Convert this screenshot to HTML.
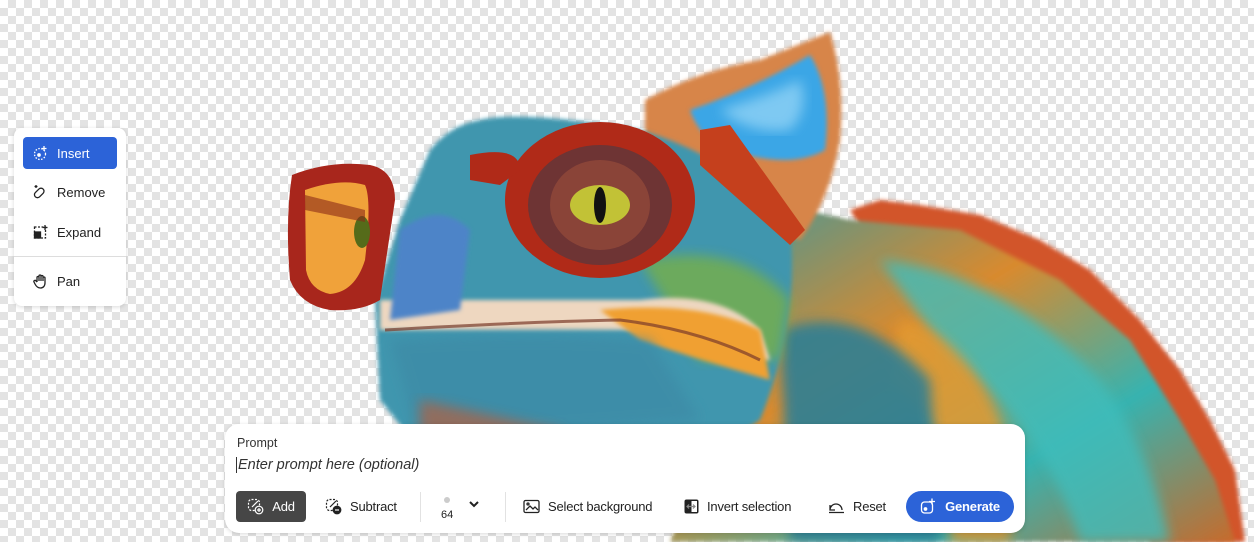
<!DOCTYPE html>
<html><head><meta charset="utf-8"><style>
html,body{margin:0;padding:0;}
body{width:1254px;height:542px;overflow:hidden;position:relative;font-family:"Liberation Sans",sans-serif;
background-color:#fff;
background-image:linear-gradient(45deg,#e3e3e3 25%,transparent 25%,transparent 75%,#e3e3e3 75%),linear-gradient(45deg,#e3e3e3 25%,transparent 25%,transparent 75%,#e3e3e3 75%);
background-size:16px 16px;background-position:0 0,8px 8px;}
svg.art{position:absolute;left:0;top:0;}
.menu{position:absolute;left:14px;top:128px;width:112px;height:178px;background:#fff;border-radius:8px;box-shadow:0 1px 4px rgba(0,0,0,.15);}
.mi{position:absolute;left:9px;width:94px;height:32px;border-radius:4px;font-size:13px;color:#222;display:flex;align-items:center;}
.mi svg{margin-left:10px;margin-right:8px}
.panel{position:absolute;left:225px;top:424px;width:800px;height:109px;background:#fff;border-radius:14px;box-shadow:0 1px 4px rgba(0,0,0,.15);}
.lbl{position:absolute;left:12px;top:12px;font-size:12.5px;color:#333;}
.inp{position:absolute;left:11px;top:33px;font-size:14.5px;font-style:italic;color:#333;border-left:1px solid #333;padding-left:1px;}
.btn{position:absolute;top:67px;height:31px;display:flex;align-items:center;font-size:13px;color:#222;letter-spacing:-0.2px}
.btn svg{margin-right:8px}
.sep{position:absolute;top:68px;width:1px;height:30px;background:#e2e2e2;}
</style></head><body>
<svg class="art" width="1254" height="542" viewBox="0 0 1254 542">
<defs>
<filter id="b"><feGaussianBlur stdDeviation="6"/></filter>
<filter id="b2"><feGaussianBlur stdDeviation="2"/></filter>
<linearGradient id="body" x1="0" y1="0" x2="1" y2="1"><stop offset="0" stop-color="#2f9aa8"/><stop offset=".4" stop-color="#d98a2e"/><stop offset=".7" stop-color="#36b3b0"/><stop offset="1" stop-color="#c86a2a"/></linearGradient>
</defs>
<path d="M850 210 L880 200 L920 205 L980 215 L1040 240 L1090 270 L1140 320 L1180 370 L1210 420 L1235 470 L1245 542 L1150 542 L1100 420 L1000 300 L880 260Z" fill="#d2542a" filter="url(#b2)"/>
<path d="M760 200 L850 220 L960 230 L1060 280 L1130 340 L1180 420 L1215 480 L1235 542 L670 542 L700 470 L760 400Z" fill="url(#body)" filter="url(#b2)"/>
<path d="M880 260 Q1000 270 1100 380 Q1150 450 1170 542 L1080 542 Q1040 420 950 360Z" fill="#3fbdbb" opacity=".8" filter="url(#b)"/>
<path d="M900 320 Q960 330 1000 420 Q1020 480 1010 542 L950 542 Q960 430 890 380Z" fill="#e29a32" opacity=".85" filter="url(#b)"/>
<path d="M780 330 Q860 300 930 380 L940 542 L790 542Z" fill="#2d7f94" opacity=".9" filter="url(#b)"/>
<path d="M645 100 Q700 70 760 60 Q810 40 830 32 Q845 80 840 140 Q830 200 800 240 L700 200 L645 140Z" fill="#d7854a" filter="url(#b2)"/>
<path d="M690 110 Q750 90 810 55 Q832 90 825 150 Q790 170 730 150 Q700 140 690 110Z" fill="#3aa6e6" filter="url(#b2)"/>
<path d="M720 110 Q770 95 800 80 Q810 110 790 130 Q750 135 720 110Z" fill="#8fd2f5" opacity=".8" filter="url(#b)"/>
<path d="M430 150 Q450 125 480 120 Q520 110 640 130 Q740 160 790 230 Q800 320 760 420 L700 460 L560 470 L420 450 L380 400 L375 300 L400 220Z" fill="#3f96ae" filter="url(#b2)"/>
<path d="M640 260 Q740 240 790 300 L780 360 L700 360Z" fill="#7fb33a" opacity=".7" filter="url(#b)"/>
<path d="M380 300 Q520 300 640 300 Q720 290 760 330 L770 360 Q720 360 640 330 Q520 330 380 330Z" fill="#eed7c0" filter="url(#b2)"/>
<path d="M600 310 Q700 300 760 330 L770 380 Q700 360 640 340Z" fill="#f0a032" filter="url(#b2)"/>
<path d="M385 330 Q520 322 620 320 Q700 330 760 360" stroke="#7a3a2a" stroke-width="3" fill="none" opacity=".7"/>
<path d="M390 340 Q540 330 650 340 L700 420 L420 440Z" fill="#3c8aa6" opacity=".7" filter="url(#b)"/>
<path d="M420 400 L560 430 L600 470 L420 460Z" fill="#c8582e" opacity=".6" filter="url(#b)"/>
<path d="M400 230 Q440 200 470 230 L460 310 L390 320Z" fill="#4e84c8" filter="url(#b2)"/>
<path d="M700 130 L730 125 L805 230 L790 245 L700 165Z" fill="#c5401d"/>
<ellipse cx="600" cy="200" rx="95" ry="78" fill="#b02a18"/>
<ellipse cx="600" cy="205" rx="72" ry="60" fill="#6e3434"/>
<ellipse cx="600" cy="205" rx="50" ry="45" fill="#8a4438"/>
<ellipse cx="600" cy="205" rx="30" ry="20" fill="#c2c236"/>
<ellipse cx="600" cy="205" rx="6" ry="18" fill="#111"/>
<path d="M470 155 Q520 145 520 170 L500 185 L470 180Z" fill="#b02a18"/>
<path d="M292 175 Q330 160 370 165 Q395 170 395 200 L380 300 Q360 312 330 310 Q300 305 290 280 Q285 220 292 175Z" fill="#a8261c"/>
<path d="M305 190 Q340 178 365 185 Q372 200 365 260 Q355 292 330 294 Q310 290 306 270Z" fill="#f0a23a"/>
<ellipse cx="362" cy="232" rx="8" ry="16" fill="#556b1a"/>
<path d="M305 195 L365 210 L365 222 L305 210Z" fill="#8a2a18" opacity=".6"/>
</svg>

<div class="menu">
 <div class="mi" style="top:9px;background:#2c63d8;color:#fff">
  <svg width="16" height="16" viewBox="0 0 16 16" fill="none" stroke="#fff" stroke-width="1.3"><circle cx="7" cy="9" r="5.5" stroke-dasharray="1.5 1.5"/><circle cx="6" cy="10" r="1.2" fill="#fff"/><path d="M11 1v5M8.5 3.5h5"/></svg>Insert</div>
 <div class="mi" style="top:48px">
  <svg width="16" height="16" viewBox="0 0 16 16" fill="none" stroke="#222" stroke-width="1.3"><rect x="3" y="5" width="6" height="11" rx="3" transform="rotate(45 8 10)"/><path d="M3 1v3M1.5 2.5h3"/></svg>Remove</div>
 <div class="mi" style="top:88px">
  <svg width="16" height="16" viewBox="0 0 16 16" fill="none" stroke="#222" stroke-width="1.3"><rect x="1.5" y="3" width="11" height="11" stroke-dasharray="2 1.5"/><rect x="1.5" y="8" width="6" height="6" fill="#222"/><path d="M12 1v5M9.5 3.5h5"/></svg>Expand</div>
 <div style="position:absolute;left:0;right:0;top:128px;height:1px;background:#ddd"></div>
 <div class="mi" style="top:137px">
  <svg width="16" height="16" viewBox="0 0 16 16" fill="none" stroke="#222" stroke-width="1.3"><path d="M4 9V4.5a1 1 0 012 0V8M6 8V3a1 1 0 012 0v5M8 8V3.5a1 1 0 012 0V8M10 8V5a1 1 0 012 0v5c0 3-2 5-4.5 5S3 13 2 11l-1-2a1 1 0 012-1l1 1"/></svg>Pan</div>
</div>

<div class="panel">
 <div class="lbl">Prompt</div>
 <div class="inp">Enter prompt here (optional)</div>
 <div class="btn" style="left:11px;width:70px;background:#464646;border-radius:4px;color:#fff;justify-content:center">
  <svg width="17" height="17" viewBox="0 0 17 17" fill="none" stroke="#fff" stroke-width="1.2"><rect x="1.5" y="1.5" width="11" height="11" rx="3" stroke-dasharray="2 1.5"/><path d="M5 9l6-6"/><circle cx="12" cy="12" r="3.8" fill="#464646"/><path d="M12 10v4M10 12h4"/></svg>Add</div>
 <div class="btn" style="left:100px">
  <svg width="17" height="17" viewBox="0 0 17 17" fill="none" stroke="#222" stroke-width="1.2"><rect x="1.5" y="1.5" width="11" height="11" rx="3" stroke-dasharray="2 1.5"/><path d="M5 9l6-6"/><circle cx="12" cy="12" r="3.8" fill="#222"/><path d="M10 12h4" stroke="#fff"/></svg>Subtract</div>
 <div class="sep" style="left:195px"></div>
 <div style="position:absolute;left:219px;top:73px;width:6px;height:6px;border-radius:50%;background:#ccc"></div>
 <div style="position:absolute;left:216px;top:85px;font-size:11px;color:#222">64</div>
 <svg style="position:absolute;left:243px;top:76px" width="12" height="8" viewBox="0 0 12 8" fill="none" stroke="#222" stroke-width="2"><path d="M2 2l4 4 4-4"/></svg>
 <div class="sep" style="left:280px"></div>
 <div class="btn" style="left:298px">
  <svg width="17" height="15" viewBox="0 0 17 15" fill="none" stroke="#222" stroke-width="1.3"><rect x="1" y="1.5" width="15" height="12" rx="1.5"/><path d="M3 11l4-4 3 3 2-2 3 3"/><circle cx="5" cy="5" r="1"/></svg>Select background</div>
 <div class="btn" style="left:459px">
  <svg width="15" height="15" viewBox="0 0 15 15"><rect x=".5" y=".5" width="14" height="14" rx="2" fill="#222"/><rect x="7.5" y="2" width="5.5" height="11" fill="#fff"/><path d="M3 7.5h8M5 5.5l-2 2 2 2M9 5.5l2 2-2 2" stroke="#888" stroke-width="1.2" fill="none"/></svg>Invert selection</div>
 <div class="btn" style="left:602px">
  <svg width="18" height="14" viewBox="0 0 18 14" fill="none" stroke="#222" stroke-width="1.3"><path d="M3 10a6 6 0 0112 0M3 5v5h5M2 12.5h15"/></svg>Reset</div>
 <div class="btn" style="left:681px;width:108px;background:#2c63d8;border-radius:16px;color:#fff;font-weight:bold;justify-content:center">
  <svg width="17" height="17" viewBox="0 0 17 17" fill="none" stroke="#fff" stroke-width="1.3"><rect x="1.5" y="4" width="11" height="11" rx="3"/><circle cx="5.5" cy="11" r="1.2" fill="#fff"/><path d="M12 .5v6M9 3.5h6"/></svg>Generate</div>
</div>
</body></html>
